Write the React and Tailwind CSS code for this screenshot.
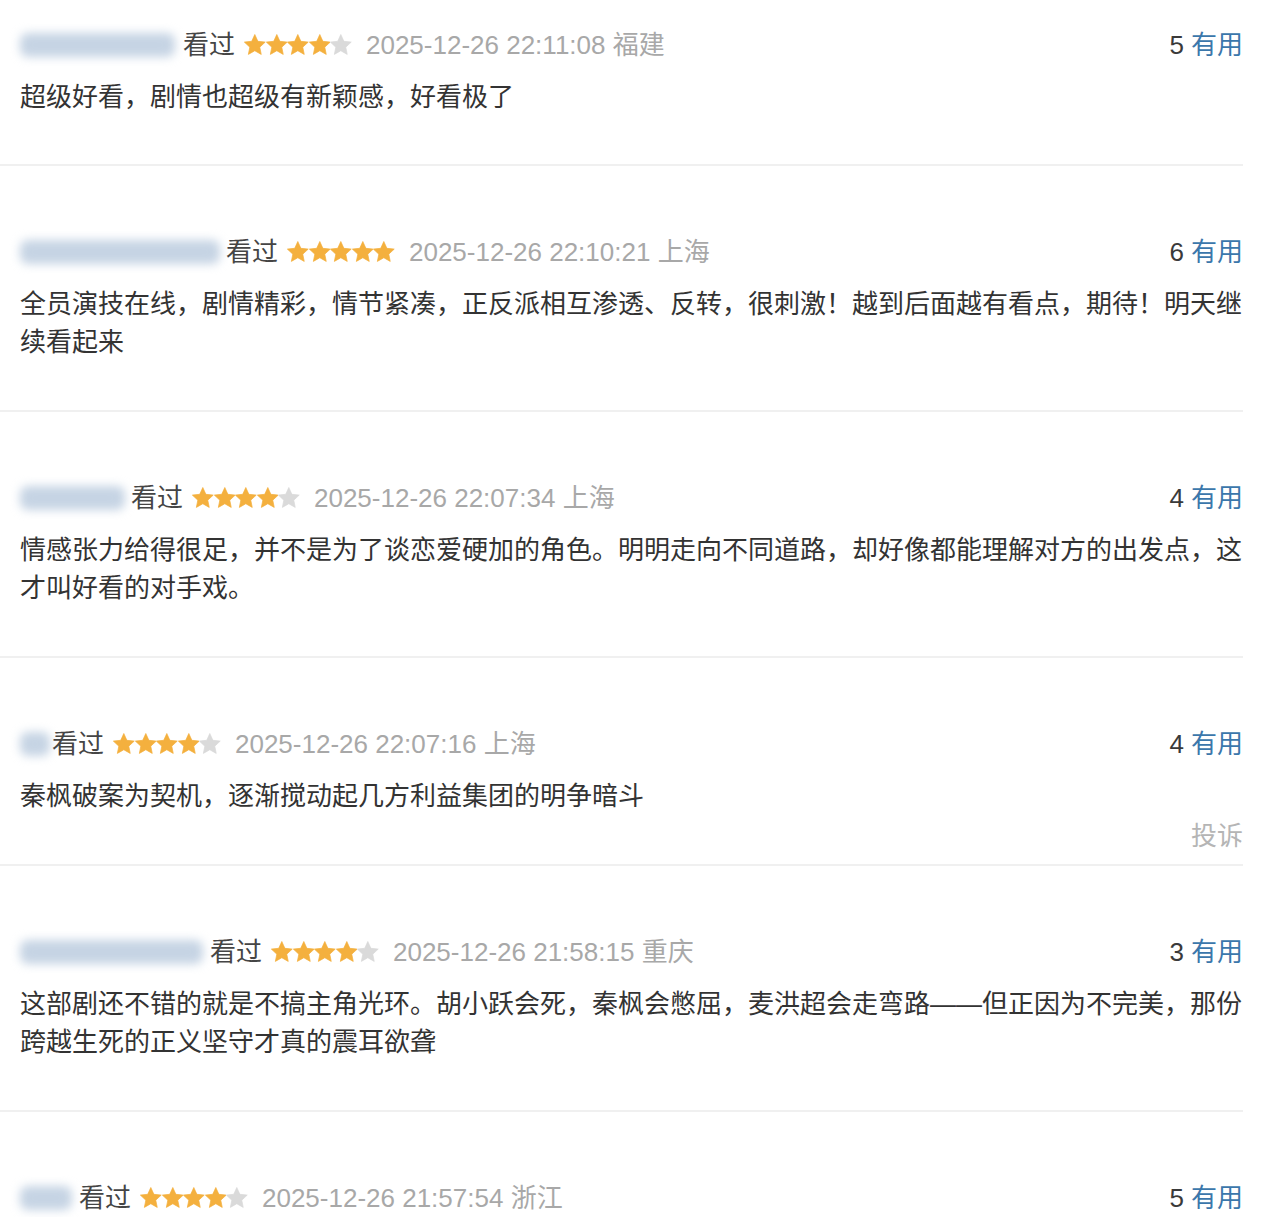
import React from "react";

const reviews = [
  {
    nameW: 155,
    gapAfterName: 8,
    stars: 4,
    date: "2025-12-26 22:11:08",
    loc: "福建",
    useful: 5,
    text: "超级好看，剧情也超级有新颖感，好看极了",
  },
  {
    nameW: 200,
    gapAfterName: 6,
    stars: 5,
    date: "2025-12-26 22:10:21",
    loc: "上海",
    useful: 6,
    text: "全员演技在线，剧情精彩，情节紧凑，正反派相互渗透、反转，很刺激！越到后面越有看点，期待！明天继续看起来",
  },
  {
    nameW: 105,
    gapAfterName: 6,
    stars: 4,
    date: "2025-12-26 22:07:34",
    loc: "上海",
    useful: 4,
    text: "情感张力给得很足，并不是为了谈恋爱硬加的角色。明明走向不同道路，却好像都能理解对方的出发点，这才叫好看的对手戏。",
  },
  {
    nameW: 30,
    gapAfterName: 2,
    stars: 4,
    date: "2025-12-26 22:07:16",
    loc: "上海",
    useful: 4,
    text: "秦枫破案为契机，逐渐搅动起几方利益集团的明争暗斗",
    report: true,
  },
  {
    nameW: 183,
    gapAfterName: 7,
    stars: 4,
    date: "2025-12-26 21:58:15",
    loc: "重庆",
    useful: 3,
    text: "这部剧还不错的就是不搞主角光环。胡小跃会死，秦枫会憋屈，麦洪超会走弯路——但正因为不完美，那份跨越生死的正义坚守才真的震耳欲聋",
  },
  {
    nameW: 52,
    gapAfterName: 7,
    stars: 4,
    date: "2025-12-26 21:57:54",
    loc: "浙江",
    useful: 5,
    text: "",
  },
];

function Star({ filled }) {
  return (
    <svg width="21.6" height="21.6" viewBox="0 0 24 24" className="shrink-0">
      <path
        d="M12 0.6L15.41 8.11L23.6 9.03L17.52 14.59L19.17 22.67L12 18.6L4.83 22.67L6.48 14.59L0.4 9.03L8.59 8.11Z"
        fill={filled ? "#f4b03e" : "#dadada"}
        stroke={filled ? "#f4b03e" : "#dadada"}
        strokeWidth="0.8"
        strokeLinejoin="round"
      />
    </svg>
  );
}

function Item({ r, first }) {
  return (
    <div
      className={`relative border-b-2 border-[#f0f0f0] pl-[20px] ${
        first ? "pt-[26px] pb-[48px]" : "pt-[67px] pb-[49px]"
      }`}
    >
      <div className="flex items-center justify-between leading-[38px] h-[38px]">
        <div className="flex items-center">
          <span
            className="block h-[24px] rounded-[8px] bg-[#c6d4e4] blur-[5px]"
            style={{ width: r.nameW, marginRight: r.gapAfterName }}
          />
          <span className="text-[#454545] relative">看过</span>
          <span className="flex items-center ml-[9px] mr-[14px]">
            {[0, 1, 2, 3, 4].map((i) => (
              <Star key={i} filled={i < r.stars} />
            ))}
          </span>
          <span className="text-[#a8a8a8]">
            {r.date} {r.loc}
          </span>
        </div>
        <div className="flex items-center">
          <span className="text-[#3a3a3a]">{r.useful}</span>
          <span className="text-[#3b77ab] ml-[7px]">有用</span>
        </div>
      </div>
      {r.text && (
        <p className="mt-[14px] leading-[38px] text-[#333333] w-[1224px]">
          {r.text}
        </p>
      )}
      {r.report && (
        <span className="absolute right-0 bottom-[9px] leading-[38px] text-[#b5b5b5]">
          投诉
        </span>
      )}
    </div>
  );
}

export default function App() {
  return (
    <div
      className="bg-white w-[1286px] h-[1217px] overflow-hidden text-[26px]"
      style={{ fontFamily: '"Liberation Sans", "Noto Sans CJK SC", sans-serif' }}
    >
      <div className="w-[1243px]">
        {reviews.map((r, i) => (
          <Item key={i} r={r} first={i === 0} />
        ))}
      </div>
    </div>
  );
}
